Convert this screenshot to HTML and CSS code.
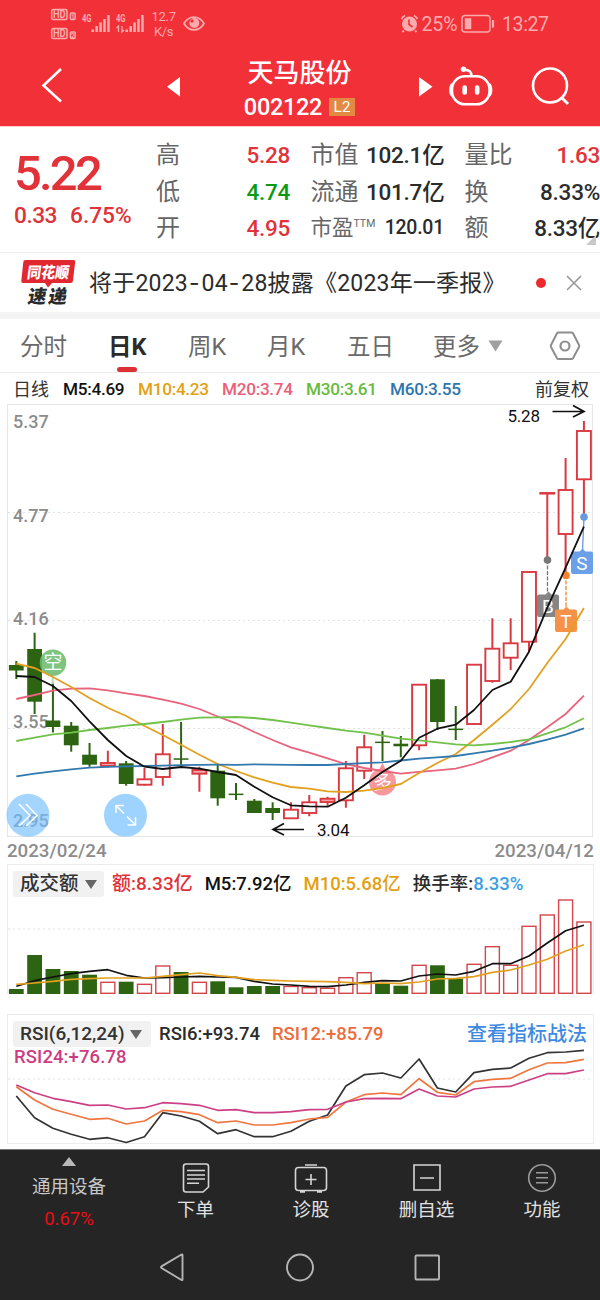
FILE: index.html
```html
<!DOCTYPE html>
<html lang="zh-CN">
<head>
<meta charset="utf-8">
<title>天马股份 002122</title>
<link rel="stylesheet" href="styles.css">
</head>
<body>
<div class="screen">
  <header class="header">
    <div class="status">
      <svg class="status-left" width="170" height="34" viewBox="48 6 170 34">
        <g fill="none" stroke="currentColor" stroke-width="1.5">
          <rect x="51.7" y="9.5" width="15.300" height="10" rx="1.5"/>
          <rect x="51.7" y="28.5" width="15.300" height="10" rx="1.5"/>
          <rect x="70.4" y="13" width="4.8" height="6.6" rx="1"/>
          <rect x="70.4" y="32" width="4.8" height="6.6" rx="1"/>
        </g>
        <g class="st-bold">
          <text x="53" y="18" font-size="10" textLength="12.700" lengthAdjust="spacingAndGlyphs">HD</text>
          <text x="53" y="37" font-size="10" textLength="12.700" lengthAdjust="spacingAndGlyphs">HD</text>
          <text x="71" y="18.6" font-size="6.500">1</text>
          <text x="71" y="37.6" font-size="6.500">2</text>
          <text x="82" y="22.300" font-size="10.500" textLength="9.5" lengthAdjust="spacingAndGlyphs">4G</text>
          <text x="116" y="22.300" font-size="10.500" textLength="9.5" lengthAdjust="spacingAndGlyphs">4G</text>
        </g>
        <path fill="currentColor" d="M91.5 29.5h2.5V32h-2.5zM95.4 26h2.5v6h-2.5zM99.3 22.500h2.500V32h-2.500zM103.200 19h2.500v13h-2.500zM107.200 15h2.500v17h-2.500zM125.500 29.500h2.500V32h-2.500zM129.400 26h2.500v6h-2.500zM133.300 22.500h2.500V32h-2.500zM137.200 19h2.500v13h-2.500zM141.200 15h2.500v17h-2.500z"/>
        <path fill="none" stroke="currentColor" stroke-width="1.3" d="M118.500 32v-6l-2 2M122 26v6l2-2"/>
        <text x="151.500" y="21.300" font-size="13" textLength="24.500">12.7</text>
        <text x="154" y="36" font-size="13" textLength="19.500">K/s</text>
        <path fill="none" stroke="currentColor" stroke-width="1.800" d="M184 23.500c5-8.500 15-8.500 20 0c-5 8.500-15 8.500-20 0z"/>
        <circle cx="194.300" cy="23" r="5" fill="currentColor"/>
        <circle cx="192" cy="21" r="1.700" fill="#f23038"/>
      </svg>
      <svg class="status-right" width="152" height="24" viewBox="400 12 152 24">
        <circle cx="409.500" cy="24" r="7.500" fill="currentColor"/>
        <path d="M409 19.500v5l3.500 2.500" fill="none" stroke="#f23038" stroke-width="1.600"/>
        <path d="M401.500 19a9 9 0 0 1 3.500-3.500M417.500 19a9 9 0 0 0-3.500-3.500M404 30.500l-1.500 1.500M415 30.500l1.500 1.500" stroke="currentColor" stroke-width="1.800" fill="none"/>
        <text x="421.500" y="31" font-size="19.500" textLength="36">25%</text>
        <rect x="462" y="15.500" width="28" height="16.500" rx="3" fill="none" stroke="currentColor" stroke-width="1.500"/>
        <rect x="464.800" y="18.200" width="6.500" height="11" fill="currentColor"/>
        <path d="M493 20v7.500" stroke="currentColor" stroke-width="2.200"/>
        <text x="502" y="31" font-size="19.500" textLength="47">13:27</text>
      </svg>
    </div>
    <div class="titlebar">
      <svg width="180" height="78" viewBox="0 48 180 78" class="tb-left">
        <path d="M61 69L43.500 85.500L61 101.500" fill="none" stroke="#fff" stroke-width="2.600"/>
        <path d="M180 77v19.500l-13-9.800z" fill="#fff"/>
      </svg>
      <div class="title">
        <div class="name">天马股份</div>
        <div class="code"><span>002122</span><b class="l2">L2</b></div>
      </div>
      <svg width="181" height="78" viewBox="419 48 181 78" class="tb-right">
        <path d="M419 77v19.500l13.500-9.800z" fill="#fff"/>
        <g fill="none" stroke="#fff" stroke-width="2.600">
          <rect x="452" y="76.300" width="37.500" height="28" rx="13"/>
          <path d="M471.500 76c0-4-2-6-7-6.200"/>
          <path d="M452.500 84c-3 2-3 10 0 12M489 84c3 2 3 10 0 12" stroke-width="2.200"/>
          <circle cx="550" cy="85.500" r="17"/>
          <path d="M561.500 97.500l6.500 6.500" stroke-width="3"/>
        </g>
        <circle cx="463.500" cy="69.300" r="2.700" fill="#fff"/>
        <path d="M464.700 87.500v5M477.200 87.500v5" stroke="#fff" stroke-width="4.600" stroke-linecap="round"/>
      </svg>
    </div>
  </header>

  <section class="quote">
    <div class="price">
      <div class="last">5.22</div>
      <div class="chg"><span>0.33</span><span>6.75%</span></div>
    </div>
    <div class="stats">
      <span class="k">高</span><b class="v red">5.28</b><span class="k k2">市值</span><b class="v">102.1亿</b><span class="k k3">量比</span><b class="v red">1.63</b>
      <span class="k">低</span><b class="v green">4.74</b><span class="k k2">流通</span><b class="v">101.7亿</b><span class="k k3">换</span><b class="v">8.33%</b>
      <span class="k">开</span><b class="v red">4.95</b><span class="k k2 small">市盈<sup>TTM</sup></span><b class="v small">120.01</b><span class="k k3">额</span><b class="v">8.33亿</b>
    </div>
    <i class="corner"></i>
  </section>

  <section class="news">
    <svg width="56" height="48" viewBox="20 258 56 48">
      <path d="M25.500 259h48q2 0 1.700 2l-2.300 19q-.3 2-2.300 2H52l-4 4.500l-3-4.500H23q-2 0-1.700-2l2-19q.2-2 2.200-2z" fill="#e1272f"/>
      <text class="logo-top" x="0" y="0" transform="translate(26.500 277) skewX(-8)" textLength="42" lengthAdjust="spacingAndGlyphs">同花顺</text>
      <text class="logo-bot" x="0" y="0" transform="translate(27 302) skewX(-10)" textLength="39">速递</text>
    </svg>
    <p>将于2023<i>-</i>04<i>-</i>28披露《2023年一季报》</p>
    <span class="dot"></span>
    <svg class="close" width="16" height="16" viewBox="0 0 16 16"><path d="M1 1l14 14M15 1L1 15" stroke="#999" stroke-width="1.600"/></svg>
  </section>

  <nav class="tabs">
    <span>分时</span><span class="on">日K</span><span>周K</span><span>月K</span><span>五日</span><span>更多</span>
    <svg class="tri" width="15" height="12" viewBox="0 0 15 12"><path d="M.5.500h14L7.500 11.500z" fill="#a0a0a0"/></svg>
    <svg class="gear" width="32" height="30" viewBox="0 0 32 30"><path d="M9.500 1.500h13q1 0 1.500.8L30 14q.5 1 0 2l-6 11.200q-.5.800-1.500.800h-13q-1 0-1.500-.8L2 16q-.5-1 0-2L8 2.300q.5-.8 1.500-.8z" fill="none" stroke="#8e8e8e" stroke-width="2"/><circle cx="16" cy="15" r="4.500" fill="none" stroke="#8e8e8e" stroke-width="2.200"/></svg>
  </nav>

  <div class="legend">
    <span class="t">日线</span><span>M5:4.69</span><span class="m10">M10:4.23</span><span class="m20">M20:3.74</span><span class="m30">M30:3.61</span><span class="m60">M60:3.55</span><span class="t">前复权</span>
  </div>

  <svg id="kline" class="chart" width="600" height="434" viewBox="0 404 600 434"></svg>
  <div class="dates"><span>2023/02/24</span><span>2023/04/12</span></div>

  <section class="panel volume">
    <div class="row">
      <button class="pick">成交额<i></i></button>
      <span class="red">额:8.33亿</span><span class="blk">M5:7.92亿</span><span class="m10">M10:5.68亿</span><span>换手率:<em>8.33%</em></span>
    </div>
    <svg id="vol" class="chart" width="600" height="96" viewBox="0 898 600 96"></svg>
  </section>

  <section class="panel rsi">
    <div class="row">
      <button class="pick">RSI(6,12,24)<i></i></button>
      <span>RSI6:+93.74</span><span class="or">RSI12:+85.79</span><a class="link">查看指标战法</a>
    </div>
    <div class="row2">RSI24:+76.78</div>
    <svg id="rsi" class="chart" width="600" height="96" viewBox="0 1048 600 96"></svg>
  </section>

  <footer class="footer">
    <div class="actions">
      <div class="act first"><svg width="14" height="10" viewBox="0 0 14 10"><path d="M7 0l7 9H0z" fill="#b8b8b8"/></svg><span>通用设备</span><b>0.67%</b></div>
      <div class="act"><svg width="32" height="32" viewBox="0 0 32 32"><path d="M6 2h20q2.500 0 2.500 2.500V25l-5.500 5H6q-2.500 0-2.500-2.500v-23Q3.500 2 6 2zM7 8.500h18M7 13h18M7 17h18M7 21.300h12" /></svg><span>下单</span></div>
      <div class="act"><svg width="34" height="32" viewBox="0 0 34 32"><path d="M4.500 5.500h25q3 0 3 3v17q0 3-3 3h-25q-3 0-3-3v-17q0-3 3-3zM11 3h12M17 12v11M11.500 17.500h11M6 30h5M23 30h5"/></svg><span>诊股</span></div>
      <div class="act"><svg width="32" height="32" viewBox="0 0 32 32"><path d="M3 3h26v25H3zM9 16h14"/></svg><span>删自选</span></div>
      <div class="act dim"><svg width="32" height="32" viewBox="0 0 32 32"><circle cx="16" cy="16" r="13.300"/><path d="M10 10.800h12M10 15.800h12M10 20.800h12"/></svg><span>功能</span></div>
    </div>
    <svg class="sysnav" width="600" height="40" viewBox="0 1248 600 40"><path d="M181.500 1254.500q1-.5 1 .5v24.500q0 1-1 .5l-20-12q-1-.8 0-1.600zM416.500 1255.500h21.500q1 0 1 1v22q0 1-1 1h-21.500q-1 0-1-1v-22q0-1 1-1z"/><circle cx="300" cy="1267.500" r="13"/></svg>
  </footer>
</div>
<script src="app.js"></script>
</body>
</html>
```
FILE: styles.css
```css
* { box-sizing: border-box; }
body { margin: 0; background: #fff; font-family: Roboto, "Noto Sans CJK SC", sans-serif; }
.screen { width: 600px; height: 1300px; overflow: hidden; display: flex; flex-direction: column; color: #2b2b2b; }
.screen > * { flex: none; }
svg { display: block; flex: none; }
.red { color: #e03238; }
.green { color: #0a9a14; }
.m10 { color: #e3a012; }
.m20 { color: #ea5f7a; }
.m30 { color: #67bb3d; }
.m60 { color: #2e76ae; }

.header { height: 126px; background: #f23038; color: #fff; }
.status { height: 48px; display: flex; justify-content: space-between; padding: 6px 48px 0 48px; color: #fbaaad; }
.status svg text { fill: currentColor; }
.status-right { margin-top: 6px; }
.st-bold { font-weight: 700; }
.titlebar { display: flex; justify-content: space-between; height: 78px; }
.title { text-align: center; padding-top: 8px; }
.name { font-size: 26px; line-height: 34px; font-weight: 500; white-space: nowrap; }
.code { display: flex; align-items: center; justify-content: center; gap: 7px; height: 34px; font-size: 23.500px; font-weight: 500; letter-spacing: -.3px; }
.l2 { background: #e38a42; font-size: 15px; font-weight: 400; line-height: 18px; width: 26px; letter-spacing: .3px; }

.quote { position: relative; height: 127px; display: flex; border-bottom: 1px solid #f0f0f0; border-top: 1px solid #fccdd0; }
.price { width: 156px; padding: 18px 0 0 14px; color: #e03238; }
.last { font-size: 49px; line-height: 58px; font-weight: 500; letter-spacing: -2.8px; }
.chg { display: flex; gap: 13px; font-size: 22.700px; line-height: 25px; font-weight: 500; letter-spacing: -.3px; }
.chg span:last-child { letter-spacing: 0; }
.chg span:first-child { letter-spacing: -.5px; }
.stats { display: grid; grid-template-columns: 60px 75px 75px 79px 76px 79px; grid-template-rows: repeat(3, 36.500px); padding-top: 10px; align-items: center; white-space: nowrap; height: 120px; }
.k { font-size: 24px; color: #666; line-height: 36px; }
.k2, .k3 { padding-left: 19.500px; }
.k.small { font-size: 21.500px; }
.k sup { font-size: 10.500px; vertical-align: 8px; line-height: 0; }
.v { font-size: 22.500px; font-weight: 500; text-align: right; line-height: 36px; letter-spacing: -.25px; padding-right: 1px; }
.v:nth-child(6n) { padding-right: 0; }
.v.small { font-size: 19.500px; }
.corner { position: absolute; right: 4px; bottom: 7px; border: 5.500px solid transparent; border-right-color: #c8c8c8; border-bottom-color: #c8c8c8; }

.news { height: 59px; display: flex; align-items: center; padding-left: 20px; }
.logo-top { font-size: 15.500px; font-weight: 900; fill: #fff; }
.logo-bot { font-size: 18.500px; font-weight: 900; fill: #2a2a2a; }
.news p { margin: 2px 0 0 13px; width: 447px; font-size: 23px; line-height: 36px; white-space: nowrap; letter-spacing: .2px; }
.news p i { font-style: normal; font-family: Inter, sans-serif; letter-spacing: 2px; padding-left: 1px; }
.dot { width: 10px; height: 10px; border-radius: 50%; background: #ec2a2e; }
.close { margin-left: 20px; }

.tabs { height: 61px; border-top: 7px solid #f4f4f4; border-bottom: 1px solid #ececec; display: grid; grid-template-columns: 88px 80px 79px 80px 86px 55px 61px 32px; padding-left: 20px; font-size: 23.500px; color: #6a6a6a; line-height: 54px; align-items: center; white-space: nowrap; }
.tabs span { padding-top: 1px; margin-bottom: -1px; }
.tabs .on { position: relative; color: #2b2b2b; font-weight: 700; }
.tabs .on::after { content: ""; position: absolute; left: 9px; bottom: 2px; width: 20px; height: 5px; border-radius: 2.500px; background: #dd3036; }

.legend { height: 31px; display: grid; grid-template-columns: 50px 75px 84px 84px 84px 145px auto; padding-left: 13px; font-size: 17.200px; font-weight: 500; line-height: 33px; color: #111; white-space: nowrap; letter-spacing: -.3px; }
.legend .t { font-size: 18px; font-weight: 400; color: #333; letter-spacing: 0; }

.chart { overflow: visible; }
.chart text.axis { font-size: 18px; font-weight: 500; fill: #8c8c8c; }
.chart text.ann { font-size: 17px; fill: #111; }
.chart text.badge { font-size: 19px; fill: #fff; text-anchor: middle; }
.dates { height: 26px; padding: 0 6px 0 7px; display: flex; justify-content: space-between; font-size: 18.700px; font-weight: 500; line-height: 27px; color: #8c8c8c; }

.panel { position: relative; font-weight: 500; font-size: 18.500px; }
.panel::before { content: ""; position: absolute; left: 7px; right: 6px; top: 0; bottom: 0; border: 1px solid #ececec; }
.volume { height: 130px; }
.volume::before { border-bottom: 0; }
.row { position: relative; display: flex; align-items: center; height: 26px; margin: 7px 13px 0; white-space: nowrap; line-height: 26px; }
.pick { border: 0; margin: 0; background: #f1f1f1; border-radius: 3px; padding: 0 7px; height: 26px; font: inherit; font-size: 19.500px; line-height: 26px; color: #333; display: flex; align-items: center; gap: 6px; }
.pick i { border: 6px solid transparent; border-top: 9px solid #666; border-bottom: 0; }
.volume .row { gap: 12px; }
.volume .row > :nth-child(2) { margin-left: -4px; font-size: 19px; }
.volume .pick { width: 91px; }
.blk { color: #111; }
.row em { font-style: normal; color: #3a9ee4; }
.panel .chart { position: relative; }
.volume .chart { margin-top: 1px; }
.rsi { margin-top: 20px; height: 130px; }
.rsi .pick { width: 138px; }
.rsi .row { font-size: 18.500px; }
.rsi .pick { font-size: 19px; gap: 5px; }
.rsi .row { gap: 10px; }
.rsi .row span { margin-left: -2px; }
.rsi .row .or { color: #ee6b3a; margin-left: 2px; }
.link { margin-left: auto; margin-right: 0; font-size: 20px; color: #4089e0; }
.row2 { position: relative; height: 20px; line-height: 21px; margin-left: 14px; color: #cd3b80; letter-spacing: .1px; }
.rsi .chart { margin-top: -19px; }

.footer { margin-top: 5px; height: 151px; background: #252525; border-top: 1px solid #777; color: #e2e2e2; }
.actions { display: grid; grid-template-columns: 138px 115px 116px 115px 116px; height: 98px; }
.act { display: flex; flex-direction: column; align-items: center; font-size: 18.500px; line-height: 26px; padding-top: 12px; }
.act span { margin-top: 3px; }
.act svg { fill: none; stroke: #d5d5d5; stroke-width: 1.600; }
.act.first { padding-top: 7px; color: #c8c8c8; }
.act.first svg { stroke: none; }
.act.first span { margin-top: 7px; }
.act b { font-size: 18.500px; font-weight: 400; color: #e60f14; margin-top: 6px; }
.act.dim svg { stroke: #9a9a9a; }
.sysnav { fill: none; stroke: #b5b5b5; stroke-width: 1.900; }
```
FILE: app.js
```js
const RED = '#d93a41', GREEN = '#2c6412';
const X = i => 16.3 + 18.31 * i;
const line = (ys, color, w) => `<polyline fill="none" stroke="${color}" stroke-width="${w || 1.8}" stroke-linejoin="round" points="${ys.map((y, i) => X(i).toFixed(1) + ',' + y).join(' ')}"/>`;
const grid = y => `<path d="M8 ${y}H592" stroke="#e2e2e2" stroke-dasharray="2 3"/>`;

// direction, body top, body bottom, wick high, wick low
const candles = [
  [0,665,670.5,661,679],[0,649,701.7,632.7,714],[0,720.5,727,682.5,732.5],[0,725.7,745.3,722,751.7],
  [0,754.7,764.7,743,766.7],[1,763,766,750.7,767.5],[0,763.3,784,761,785.7],[1,779.3,784.7,768,785.7],
  [1,754.3,777,724,785.7],[0,758.3,759.8,722,765],[1,770,773.7,766.7,791.7],[0,770.7,798.3,765,805.7],
  [0,793.6,795.1,783,800],[0,800.7,813,799,813],[0,808,813,802.3,820],[1,809.7,818.3,802.3,818.3],
  [1,802.3,813,795,816.3],[1,798.7,802,796.7,805.7],[1,768.3,800.3,761,807.7],[1,747.3,770.7,734.7,779],
  [0,741.6,743.1,731,761],[0,743.7,746.3,736,757.3],[1,684.7,745.3,684,750.3],[0,679.3,722,679,730],
  [0,728.6,730.1,706,740],[1,664.7,724,664,725],[1,648.7,681,618.3,682.7],[1,643.3,657.7,618.3,670],
  [1,572,641.7,572,651.7],[1,493,493.6,493,560],[1,490,534,458,575],[1,431,479.3,421,517]
];
const ma5 = [676,677,686,701,721.3,740,756,766.7,769,767,768.7,772,775,786.7,797.3,805.3,806.3,806.7,797.7,785.3,772,760.7,737.7,728.7,724.7,710,690,681.7,651.7,607.7,567.7,526.7];
const ma10 = [663.7,668,677,687,698,707.7,716,726,735,744.7,754.7,764,771,777.3,782.7,787,788.7,791.3,792,790.7,788,784,773,763,754,740,724.7,709,689,663,639,608];
const ma20 = [699,695,690.7,688.7,688.3,690.3,693.3,696,699.7,703.7,709,716.5,723.3,732,740,747.3,752.7,758.3,764,768,771,773.7,771.8,770.3,768.7,764,757.3,750.7,740,727.3,714,695.7];
const ma30 = [741,737.7,734.3,732.7,730,728,725.7,724,722,719.7,717.7,717.3,717,718,720,722.7,725.3,728,730.7,732.7,735.7,738.7,740.3,742.3,744.3,745.3,744,742,739.3,733.3,727.3,718.3];
const ma60 = [776.3,773.6,771.3,769.4,767.7,766.8,766.3,766,765.7,765.2,764.8,764.6,764.8,764.3,764.7,764.8,765,765,764,763.2,762.3,760.5,758.7,757.3,756,753.4,750.7,747.6,744,739.6,734.7,728.3];

function candle([up, t, b, h, l], i) {
  const x = X(i), c = up ? RED : GREEN;
  const wick = up ? `M${x} ${h}V${t}M${x} ${b}V${l}` : `M${x} ${h}V${l}`;
  const body = up
    ? `<rect x="${x - 7}" y="${t}" width="14" height="${b - t}" fill="${b - t > 4 ? '#fff' : '#f3a5a8'}" stroke="${c}" stroke-width="1.9"/>`
    : `<rect x="${x - 7.4}" y="${t}" width="14.8" height="${b - t}" fill="${c}"/>`;
  return `<path d="${wick}" stroke="${c}" stroke-width="2"/>${body}`;
}
function flag(x, y, color, letter) {
  return `<path d="M${x - 9} ${y}h6.500l3-3l3 3h5.500q2 0 2 2v18.500q0 2-2 2h-18q-2 0-2-2v-18.500q0-2 2-2z" fill="${color}"/><text class="badge" x="${x}" y="${y + 18}">${letter}</text>`;
}

document.getElementById('kline').innerHTML =
  `<rect x="7.500" y="404.500" width="585" height="432" fill="#fff" stroke="#e6e6e6"/>` +
  [512.5, 620.5, 728.5].map(grid).join('') +
  [['5.37',427.5],['4.77',521.5],['4.16',624.5],['3.55',727.5],['2.95',827]].map(([t, y]) => `<text class="axis" x="13" y="${y}">${t}</text>`).join('') +
  candles.map(candle).join('') +
  `<path d="M52.700 676v8" stroke="#b9dcb9" stroke-width="2"/><circle cx="53" cy="662.700" r="13.300" fill="#6cbb6c" fill-opacity=".88"/><text class="badge" x="53" y="669">空</text>` +
  `<path d="M382.500 763l4 8h-8z" fill="#f58d92"/><circle cx="382.500" cy="782" r="13.500" fill="#f58d92" fill-opacity=".9"/><text class="badge" x="382.500" y="788.500">多</text>` +
  `<circle cx="547.500" cy="560" r="3.800" fill="#777"/><path d="M547.500 560v34" stroke="#777" stroke-width="1.300" stroke-dasharray="4 1.500"/>` +
  `<circle cx="566" cy="575.500" r="3.800" fill="#f5822c"/><path d="M566 575v34" stroke="#f5822c" stroke-width="1.300" stroke-dasharray="4 1.500"/>` +
  `<circle cx="584" cy="517" r="3.800" fill="#6699e0"/><path d="M584 517l-1.500 34" stroke="#6699e0" stroke-width="1.300"/>` +
  flag(548, 594.5, '#858585', 'B') + flag(566, 609.5, '#f59248', 'T') + flag(582, 551.5, '#6b9fe8', 'S') +
  line(ma20, '#e8637c') + line(ma10, '#e3a020') + line(ma30, '#72c14a') + line(ma60, '#3279ad') + line(ma5, '#111') +
  `<text class="ann" x="507.500" y="421.500" textLength="32.500">5.28</text><path d="M552.500 411.500H583M573 405.500l11 6l-11 5.500" fill="none" stroke="#111" stroke-width="1.700"/>` +
  `<text class="ann" x="317" y="835.500" textLength="32.500">3.04</text><path d="M304 829.500H274M284 823.500l-11 6l11 5.500" fill="none" stroke="#111" stroke-width="1.700"/>` +
  `<circle cx="28" cy="815.300" r="21.500" fill="#72bfff" fill-opacity=".65"/><circle cx="125.500" cy="815.300" r="21.500" fill="#9fd3ff"/>` +
  `<path d="M19 804l11 11.500l-11 10.500M26 804l11 11.500l-11 10.500M116 813v-7.500h8M116 805.500l8 8M135.500 817v8h-8M135.500 825l-8.500-8.500" fill="none" stroke="#fff" stroke-width="1.500"/>`;

const vol = [[0,989],[0,955],[0,969],[0,971],[0,974.7],[1,982.3],[0,981.7],[1,984.3],[1,966],[0,972],[1,982.3],[0,981.3],[0,987.3],[0,986],[0,986],[1,986.5],[1,987.7],[1,988.3],[1,977.7],[1,972.7],[0,984],[0,985.7],[1,965.3],[0,965.3],[0,978.7],[1,964.3],[1,946.7],[1,965.3],[1,926.3],[1,915],[1,900],[1,922]];
const vma5 = [986.3,980.7,977,973.7,971.3,969.7,975.3,978,977.7,977,976.3,977,977.3,981.3,984,985,986.3,986.7,985,982.3,980.7,981,976,974,975,971.3,963.7,963.7,956,943,930.7,925.3];
const vma10 = [984.3,983,981.3,979.3,978.7,978,978,978,976.3,974.7,973,975.7,977.3,979.7,980.3,981,981.3,981.7,982.3,983.7,983,983.7,982,979,978.3,976.7,972.3,970,965,959.3,951,944.7];
document.getElementById('vol').innerHTML = grid(929) +
  vol.map(([up, t], i) => up
    ? `<rect x="${X(i) - 7}" y="${t}" width="14" height="${993.3 - t}" fill="#fff" stroke="#d4464c" stroke-width="1.400"/>`
    : `<rect x="${X(i) - 7.4}" y="${t}" width="14.800" height="${994 - t}" fill="${GREEN}"/>`).join('') +
  line(vma5, '#111', 1.7) + line(vma10, '#e3a020', 1.7);

const rsi6 = [1096,1117.7,1128.3,1134.3,1139.3,1137.7,1142.5,1136.7,1112.7,1116,1121.3,1133.7,1129.7,1136.7,1136.7,1131.3,1121.3,1115,1086,1074.7,1073,1078,1059,1088,1092,1072.7,1069.3,1068,1058.3,1052.7,1052,1050.3];
const rsi12 = [1086.7,1100,1109.3,1114.3,1119.3,1118.3,1124,1121,1110.3,1111.7,1114.7,1122.7,1121,1125,1125,1122.7,1119,1117.3,1102,1094.7,1093,1094.7,1078.7,1092.3,1095,1081.7,1079.3,1078.3,1069.7,1063,1062.7,1059.3];
const rsi24 = [1085,1092.7,1098.3,1101.7,1105.3,1105,1109,1107.7,1102.7,1103.7,1105.3,1110.3,1109.7,1112.7,1112.7,1111.7,1109.7,1109.3,1102,1098.7,1098.3,1098.7,1089,1096,1097,1089,1087,1086.3,1080,1073.7,1073.7,1070];
document.getElementById('rsi').innerHTML = grid(1079) + line(rsi6, '#333', 1.7) + line(rsi12, '#f0763f', 1.7) + line(rsi24, '#cc3f85', 1.7);
```
